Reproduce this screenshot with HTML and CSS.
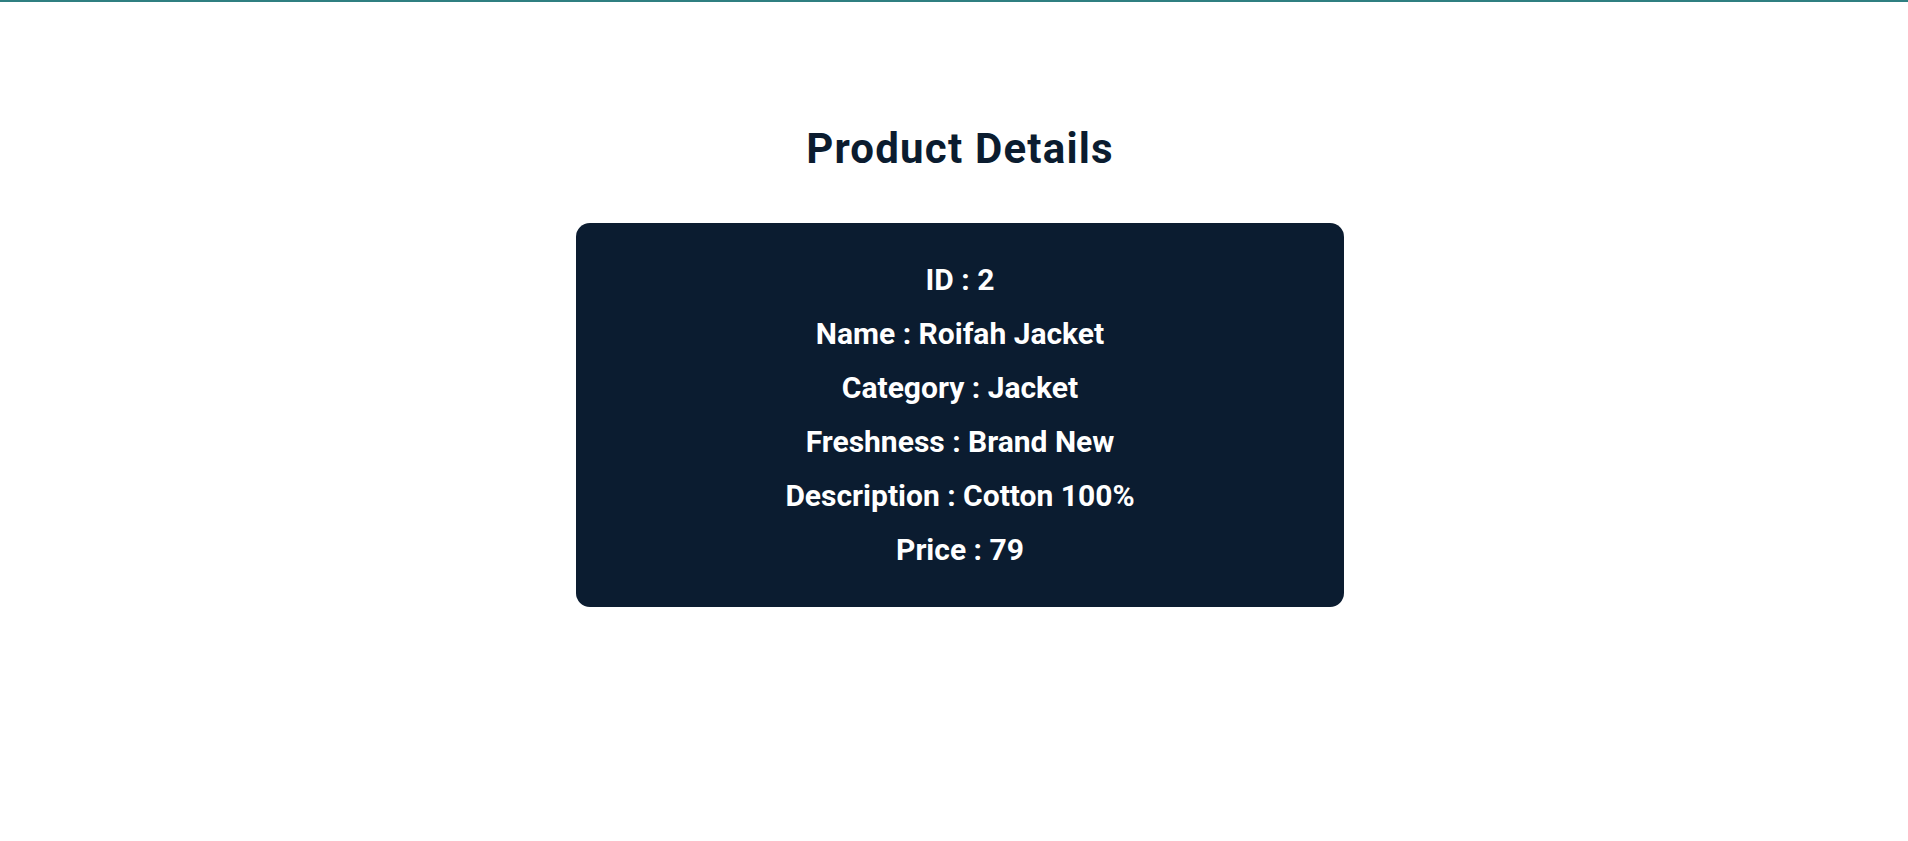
FILE: index.html
```html
<!DOCTYPE html>
<html lang="en">
<head>
    <meta charset="UTF-8">
    <meta name="viewport" content="width=device-width, initial-scale=1.0">
    <title>Product Details</title>

    <link rel="stylesheet" href="styles.css">
</head>
<body>

    <div class="container">
        <h1>Product Details</h1>

        <!-- Product card -->
        <div class="product-card">
            <p>ID : 2</p>
            <p>Name : Roifah Jacket</p>
            <p>Category : Jacket</p>
            <p>Freshness : Brand New</p>
            <p>Description : Cotton 100%</p>
            <p>Price : 79</p>
        </div>
    </div>

</body>
</html>
```

FILE: styles.css
```css
body {
    font-family: 'Roboto', 'Liberation Sans', sans-serif;
    margin: 0;
    padding: 0;
    background-color: #fff;
    border-top: 2px solid #2f7f81;  /* Teal line on top */
    min-height: 100vh;
    box-sizing: border-box;
}

.container {
    display: flex;
    flex-direction: column;
    align-items: center;
    padding-top: 122px;
    padding-left: 12px;
}

h1 {
    color: #0b1c2f;  /* Dark navy */
    font-size: 42px;
    font-weight: 700;
    letter-spacing: 1.2px;
    margin: 0 0 50px 0;
}

.product-card {
    width: 768px;
    box-sizing: border-box;
    padding: 39px 20px 40px;
    background-color: #0b1c30;  /* Dark navy card */
    border-radius: 14px;
    display: flex;
    flex-direction: column;
    align-items: center;
    gap: 19px;
}

.product-card p {
    margin: 0;
    color: #fff;
    font-size: 30px;
    font-weight: 700;
}
```
